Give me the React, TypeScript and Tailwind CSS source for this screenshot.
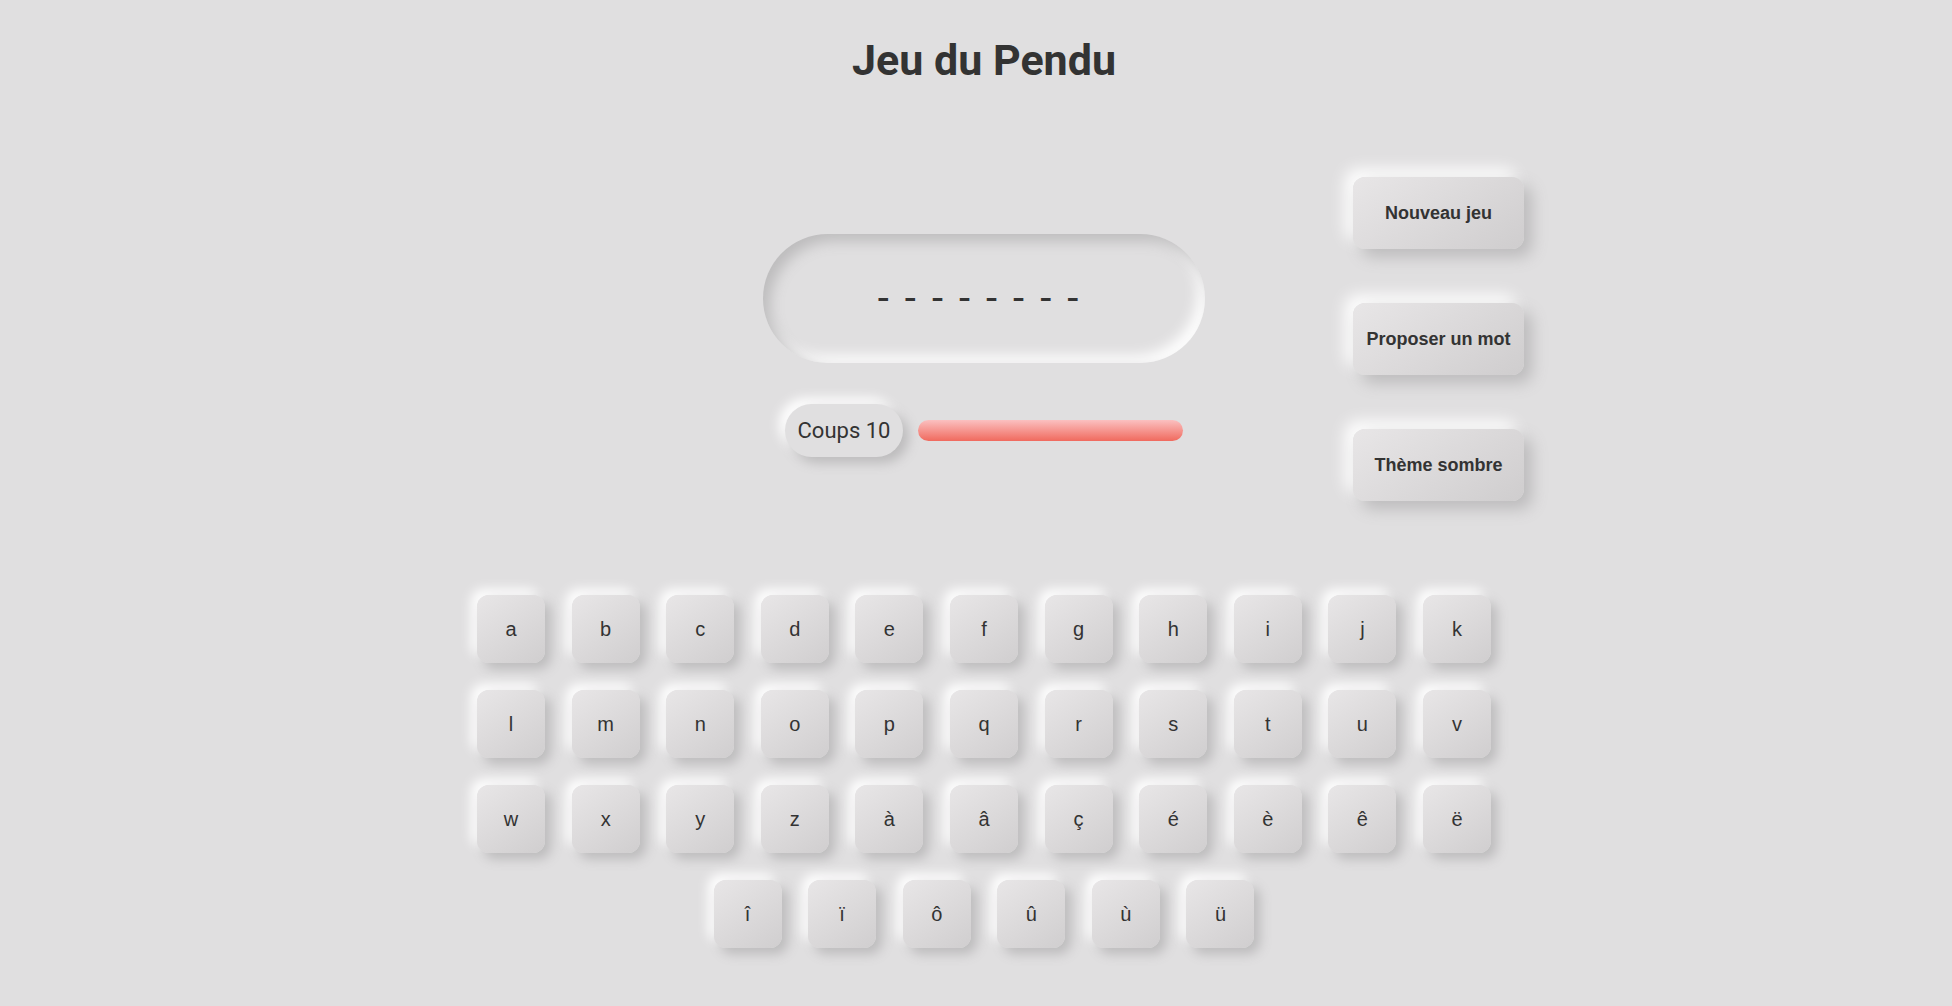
import * as React from "react"

const letters = "abcdefghijklmnopqrstuvwxyzàâçéèêëîïôûùü".split("")
const menuButtons = ["Nouveau jeu", "Proposer un mot", "Thème sombre"]

export default function App() {
  const [used, setUsed] = React.useState<string[]>([])
  const coups = 10

  return (
    <div className="min-h-screen bg-[#e0dfe0] pl-4 font-['Roboto',sans-serif] text-[#333333]">
      {/* Titre */}
      <h1 className="pt-[39px] text-center text-[43px] font-bold leading-none">Jeu du Pendu</h1>

      {/* Zone de jeu */}
      <div className="mt-[95px] grid grid-cols-[1fr_442px_1fr]">
        <div />
        <div className="mt-[57px] flex flex-col items-center">
          <div className="flex h-[129px] w-[442px] items-center justify-center gap-[16px] rounded-full bg-[#e0dfe0] pr-[12px] shadow-[inset_7px_7px_14px_#bdbcbd,inset_-7px_-7px_14px_#ffffff]">
            {Array.from({ length: 8 }).map((_, i) => (
              <span key={i} className="text-[40px] leading-none">
                -
              </span>
            ))}
          </div>
          <div className="mt-[41px] flex items-center gap-[15px]">
            <div className="flex h-[53px] items-center rounded-full bg-[#e0dfe0] px-[13px] text-[22px] shadow-[6px_6px_12px_#bcbbbc,-6px_-6px_12px_#ffffff]">
              Coups {coups}
            </div>
            <div className="h-[21px] w-[265px] rounded-full bg-[linear-gradient(to_bottom,#fbc0c0,#f06a5e)]" />
          </div>
        </div>
        <div className="flex flex-col gap-[54px] pl-[148px]">
          {menuButtons.map((label) => (
            <button
              key={label}
              className="h-[72px] w-[171px] rounded-xl bg-[linear-gradient(145deg,#e8e6e7,#cfcdce)] font-['Liberation_Sans',sans-serif] text-[18px] font-bold text-[#333333] shadow-[8px_8px_16px_#bcbbbc,-8px_-8px_16px_#ffffff]"
            >
              {label}
            </button>
          ))}
        </div>
      </div>

      {/* Clavier */}
      <div className="mx-auto mt-[94px] flex w-[1020px] flex-wrap justify-center gap-x-[26.6px] gap-y-[27px] pb-10">
        {letters.map((l) => (
          <button
            key={l}
            onClick={() => setUsed([...used, l])}
            className="flex h-[68px] w-[68px] items-center justify-center rounded-xl bg-[linear-gradient(145deg,#e8e6e7,#d0cecf)] font-['Liberation_Sans',sans-serif] text-[20px] text-[#333333] shadow-[6px_6px_12px_#bcbbbc,-6px_-6px_12px_#ffffff]"
          >
            {l}
          </button>
        ))}
      </div>
    </div>
  )
}
